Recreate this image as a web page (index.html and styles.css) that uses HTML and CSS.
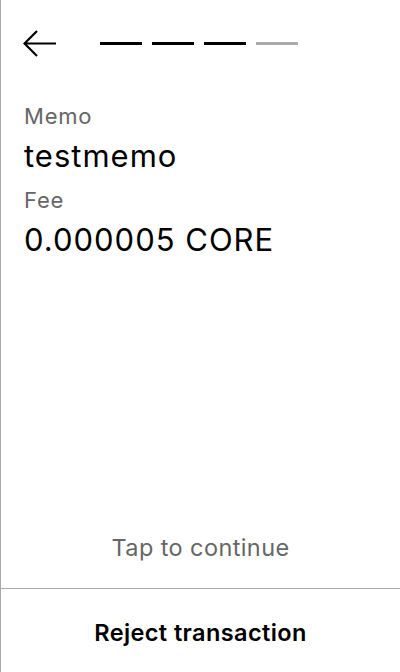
FILE: index.html
```
<!DOCTYPE html>
<html>
<head>
<meta charset="utf-8">
<link rel="stylesheet" href="styles.css">
</head>
<body>
<div class="screen">
  <header class="top">
    <button class="back" aria-label="Back">
      <svg width="34" height="28" viewBox="0 0 34 28">
        <path d="M1.5 13.5 H33 M14 1 L1.5 13.5 L14 26" fill="none" stroke="#000" stroke-width="2.2"/>
      </svg>
    </button>
    <div class="steps">
      <span class="step done"></span>
      <span class="step done"></span>
      <span class="step done"></span>
      <span class="step"></span>
    </div>
  </header>
  <main class="content">
    <div class="label">Memo</div>
    <div class="value">testmemo</div>
    <div class="label">Fee</div>
    <div class="value">0.000005 CORE</div>
  </main>
  <div class="tap">Tap to continue</div>
  <footer class="footer">
    <button class="reject">Reject transaction</button>
  </footer>
</div>
</body>
</html>
```
FILE: styles.css
```
* { box-sizing: border-box; }
html, body { margin: 0; padding: 0; background: #fff; }
body { font-family: Inter, "Noto Sans", sans-serif; color: #000; }
.screen {
  width: 400px;
  height: 672px;
  border-left: 1px solid #a8a8a8;
  display: flex;
  flex-direction: column;
}
.top {
  display: flex;
  align-items: center;
  padding: 30px 0 0 22px;
  height: 58px;
}
.back {
  border: 0;
  background: none;
  padding: 0;
  width: 34px;
  height: 28px;
  display: block;
}
.back svg { display: block; }
.steps {
  display: flex;
  gap: 10px;
  margin-left: 43px;
  margin-top: -1px;
}
.step {
  width: 42px;
  height: 3px;
  background: #aaaaaa;
}
.step.done { background: #000; }
.content {
  flex: 1;
  padding: 45px 23px 0;
}
.label {
  font-size: 22px;
  line-height: 26px;
  letter-spacing: 0.8px;
  color: #666;
}
.value {
  font-size: 31px;
  line-height: 36px;
  letter-spacing: 1px;
  margin: 9px 0 13px;
}
.tap {
  text-align: center;
  font-size: 23.5px;
  line-height: 28px;
  letter-spacing: 0.4px;
  color: #666;
  padding-bottom: 26px;
}
.footer {
  border-top: 1px solid #aaaaaa;
  height: 84px;
  padding-top: 3px;
  display: flex;
  align-items: center;
  justify-content: center;
}
.reject {
  border: 0;
  background: none;
  font-family: Inter, "Noto Sans", sans-serif;
  font-size: 23.5px;
  font-weight: 600;
  letter-spacing: 0.4px;
  color: #000;
  padding: 0;
}
```
